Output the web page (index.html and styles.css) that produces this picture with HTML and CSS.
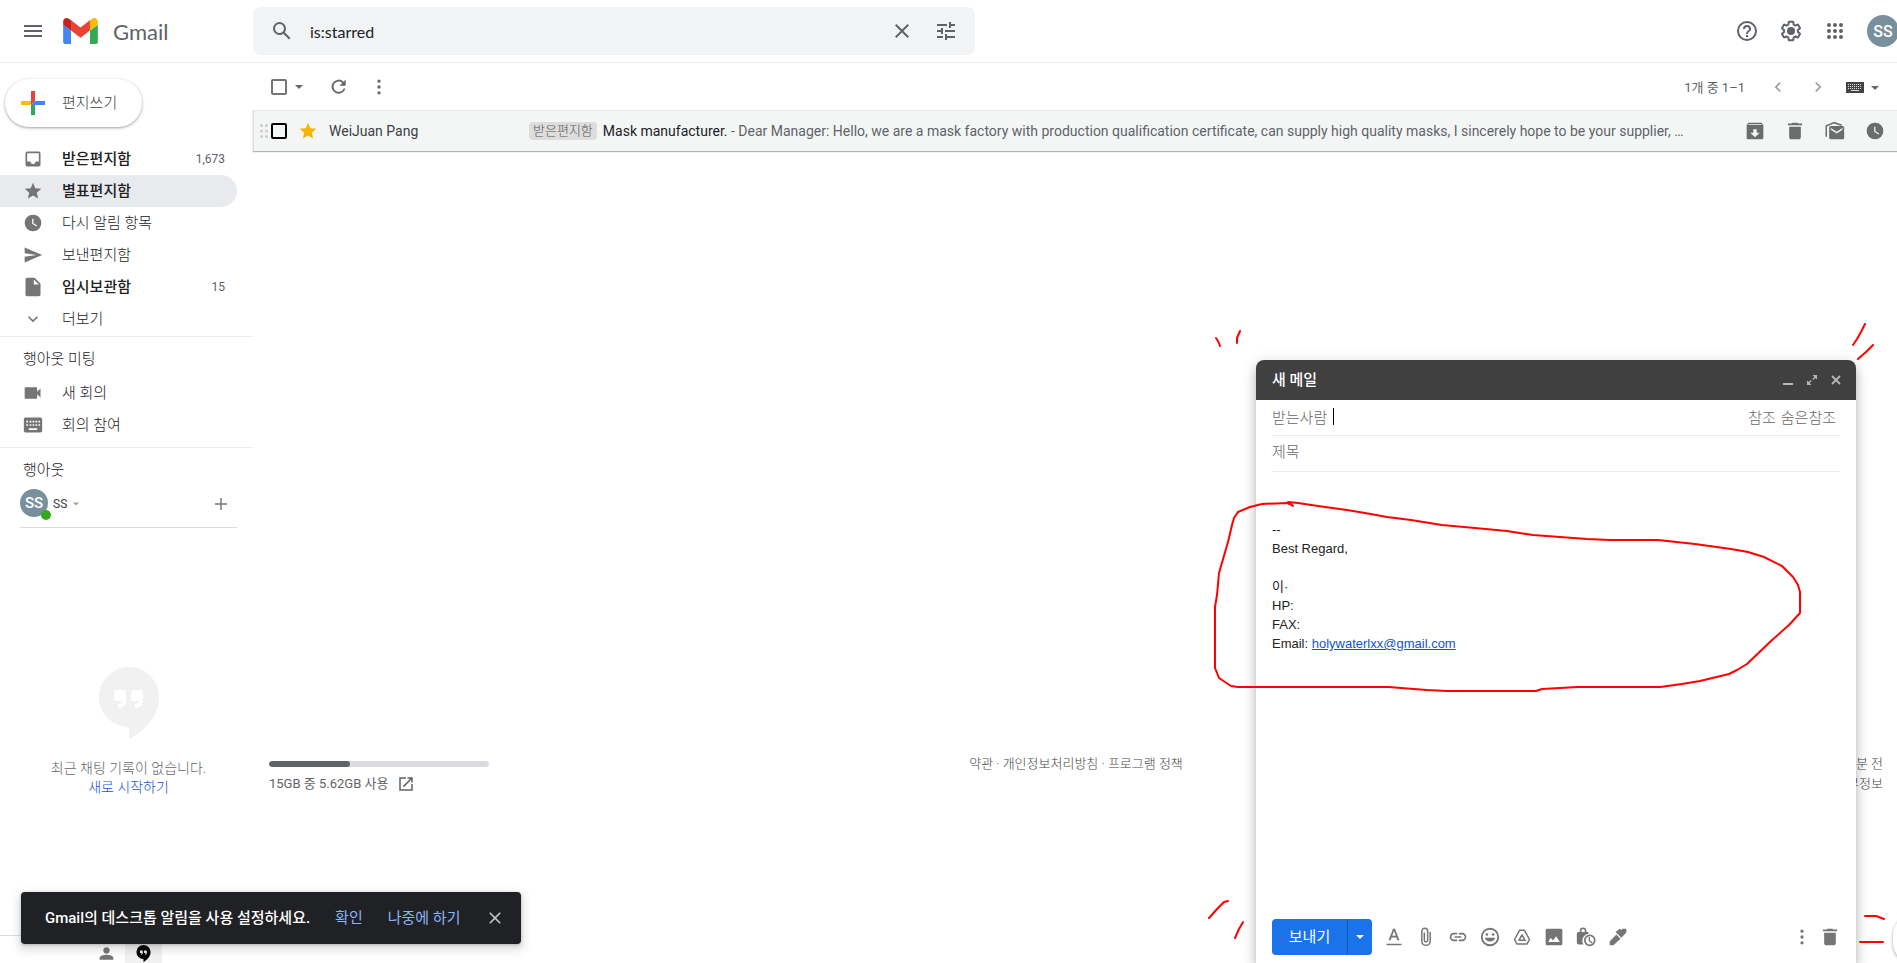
FILE: index.html
```html
<!DOCTYPE html>
<html lang="ko">
<head>
    <meta charset="UTF-8">
    <meta name="viewport" content="width=device-width, initial-scale=1.0">
    <title>별표편지함 - Gmail</title>
    <link rel="stylesheet" href="styles.css">
</head>
<body>
    <!-- Shared icons -->
    <svg class="sprite" aria-hidden="true">
        <symbol id="i-star" viewBox="0 0 24 24"><path d="M12 17.27 18.18 21l-1.64-7.03L22 9.24l-7.19-.61L12 2 9.19 8.63 2 9.24l5.46 4.73L5.82 21z"/></symbol>
        <symbol id="i-clock" viewBox="0 0 24 24"><path d="M12 2a10 10 0 1 0 0 20 10 10 0 0 0 0-20zm4.2 14.2L11 13V7h1.5v5.2l4.5 2.7z"/></symbol>
        <symbol id="i-trash" viewBox="0 0 24 24"><path d="M5 19.5C5 20.9 6.100 22 7.500 22h9c1.400 0 2.500-1.100 2.500-2.500V7H5zM20.500 3H16l-1-1H9L8 3H3.500v2h17z"/></symbol>
        <symbol id="i-close" viewBox="0 0 24 24"><path d="M19 6.400 17.600 5 12 10.600 6.400 5 5 6.400 10.600 12 5 17.600 6.400 19 12 13.400 17.600 19 19 17.600 13.400 12z"/></symbol>
        <symbol id="i-more" viewBox="0 0 24 24"><path d="M12 7a2 2 0 1 0 0-4 2 2 0 0 0 0 4zm0 3a2 2 0 1 0 0 4 2 2 0 0 0 0-4zm0 7a2 2 0 1 0 0 4 2 2 0 0 0 0-4z"/></symbol>
        <symbol id="i-caret" viewBox="0 0 8 4"><path d="M0 0h8L4 4z"/></symbol>
        <symbol id="i-hangouts" viewBox="0 0 60 72"><path fill-rule="evenodd" d="M30 0a30 30 0 0 0 0 60v12c14-7 30-22 30-42A30 30 0 0 0 30 0zM17 23h8a2 2 0 0 1 2 2v9c0 4-3 7-8 7v-4c3 0 4-1 4-3h-6a2 2 0 0 1-2-2v-7a2 2 0 0 1 2-2zm17 0h8a2 2 0 0 1 2 2v9c0 4-3 7-8 7v-4c3 0 4-1 4-3h-6a2 2 0 0 1-2-2v-7a2 2 0 0 1 2-2z"/></symbol>
    </svg>

    <div class="app">
        <header class="topbar">
            <div class="brand">
                <button class="icon-btn" aria-label="기본 메뉴"><svg class="icon" viewBox="0 0 24 24"><path d="M3 18h18v-2H3zm0-5h18v-2H3zm0-7v2h18V6z"/></svg></button>
                <a class="logo" href="#">
                    <svg class="logo-mark" viewBox="52 42 88 66">
                        <path fill="#4285f4" d="M58 108h14V74L52 59v43c0 3.320 2.690 6 6 6"/>
                        <path fill="#34a853" d="M120 108h14c3.320 0 6-2.690 6-6V59l-20 15"/>
                        <path fill="#fbbc04" d="M120 48v26l20-15v-8c0-7.420-8.470-11.650-14.400-7.200"/>
                        <path fill="#ea4335" d="M72 74V48l24 18 24-18v26L96 92"/>
                        <path fill="#c5221f" d="M52 51v8l20 15V48l-5.600-4.200c-5.940-4.450-14.400-.22-14.400 7.200"/>
                    </svg>
                    <span class="logo-text">Gmail</span>
                </a>
            </div>
            <form class="search">
                <button type="button" class="icon-btn" aria-label="메일 검색"><svg class="icon" viewBox="0 0 24 24"><path d="M20.490 19l-5.730-5.730C15.530 12.200 16 10.910 16 9.500A6.500 6.500 0 1 0 9.500 16c1.410 0 2.700-.47 3.770-1.240L19 20.490 20.490 19zM5 9.500C5 7.010 7.010 5 9.500 5S14 7.010 14 9.500 11.990 14 9.500 14 5 11.990 5 9.500z"/></svg></button>
                <input class="search-input" type="text" value="is:starred" aria-label="메일 검색">
                <button type="button" class="icon-btn" aria-label="검색어 지우기"><svg class="icon"><use href="#i-close"/></svg></button>
                <button type="button" class="icon-btn" aria-label="검색 옵션 표시"><svg class="icon" viewBox="0 0 24 24"><path d="M3 17v2h6v-2H3zM3 5v2h10V5H3zm10 16v-2h8v-2h-8v-2h-2v6h2zM7 9v2H3v2h4v2h2V9H7zm14 4v-2H11v2h10zm-6-4h2V7h4V5h-4V3h-2v6z"/></svg></button>
            </form>
            <div class="account">
                <button class="icon-btn" aria-label="지원"><svg class="icon" viewBox="0 0 24 24"><path d="M11 18h2v-2h-2v2zm1-16a10 10 0 1 0 0 20 10 10 0 0 0 0-20zm0 18a8 8 0 1 1 0-16 8 8 0 0 1 0 16zm0-14a4 4 0 0 0-4 4h2a2 2 0 0 1 4 0c0 2-3 1.750-3 5h2c0-2.250 3-2.500 3-5a4 4 0 0 0-4-4z"/></svg></button>
                <button class="icon-btn" aria-label="설정"><svg class="icon" viewBox="0 0 24 24"><path d="M13.850 22.250h-3.700c-.74 0-1.360-.54-1.450-1.270l-.27-1.890c-.27-.14-.53-.29-.79-.46l-1.800.72c-.7.260-1.470-.03-1.810-.65L2.200 15.530c-.35-.66-.2-1.440.36-1.880l1.530-1.190c-.01-.15-.02-.3-.02-.46 0-.15.010-.31.020-.46l-1.520-1.190c-.59-.45-.74-1.260-.37-1.880l1.850-3.190c.34-.62 1.110-.9 1.790-.63l1.810.730c.26-.17.520-.32.780-.46l.27-1.910c.09-.7.710-1.250 1.440-1.250h3.700c.74 0 1.360.540 1.450 1.270l.27 1.890c.27.140.530.290.790.460l1.800-.72c.71-.26 1.480.030 1.820.650l1.840 3.180c.36.660.2 1.440-.36 1.880l-1.520 1.190c.01.150.020.300.020.460s-.01.310-.02.460l1.520 1.190c.56.450.72 1.230.37 1.860l-1.860 3.220c-.34.620-1.110.9-1.800.630l-1.800-.72c-.26.170-.52.320-.78.460l-.27 1.910c-.1.680-.72 1.220-1.460 1.220zm-3.230-2h2.760l.37-2.550.53-.22c.44-.18.880-.44 1.340-.78l.45-.34 2.380.96 1.380-2.400-2.030-1.580.07-.56c.03-.26.060-.51.060-.78s-.03-.53-.06-.78l-.07-.56 2.030-1.580-1.390-2.400-2.390.96-.45-.35c-.42-.32-.87-.58-1.330-.77l-.52-.22-.37-2.550h-2.760l-.37 2.550-.53.210c-.44.190-.88.440-1.340.79l-.45.330-2.380-.95-1.390 2.390 2.030 1.580-.07.560a7 7 0 0 0-.06.790c0 .260.020.530.060.780l.07.560-2.030 1.580 1.380 2.400 2.390-.96.450.350c.43.330.86.580 1.330.770l.53.220z"/><circle cx="12" cy="12" r="4"/></svg></button>
                <button class="icon-btn" aria-label="Google 앱"><svg class="icon" viewBox="0 0 24 24"><path d="M6 8a2 2 0 1 0 0-4 2 2 0 0 0 0 4zm6 0a2 2 0 1 0 0-4 2 2 0 0 0 0 4zm6 0a2 2 0 1 0 0-4 2 2 0 0 0 0 4zM6 14a2 2 0 1 0 0-4 2 2 0 0 0 0 4zm6 0a2 2 0 1 0 0-4 2 2 0 0 0 0 4zm6 0a2 2 0 1 0 0-4 2 2 0 0 0 0 4zM6 20a2 2 0 1 0 0-4 2 2 0 0 0 0 4zm6 0a2 2 0 1 0 0-4 2 2 0 0 0 0 4zm6 0a2 2 0 1 0 0-4 2 2 0 0 0 0 4z"/></svg></button>
                <button class="avatar avatar-lg" aria-label="Google 계정">SS</button>
            </div>
        </header>

        <div class="layout">
            <aside class="sidebar">
                <button class="compose-btn">
                    <svg class="compose-plus" viewBox="0 0 24 24"><path fill="#ea4335" d="M10 0h4v10l-4 4z"/><path fill="#4285f4" d="M14 10h10v4H10z"/><path fill="#34a853" d="M10 14h4v10h-4z"/><path fill="#fbbc04" d="M0 10h10v4H0z"/></svg>
                    <span class="compose-label">편지쓰기</span>
                </button>

                <nav class="nav">
                    <a class="nav-item unread" href="#"><svg class="nav-icon" viewBox="0 0 24 24"><path d="M19 3H5a2 2 0 0 0-2 2v14c0 1.100.9 2 2 2h14a2 2 0 0 0 2-2V5a2 2 0 0 0-2-2zm0 12h-4a3 3 0 0 1-6 0H5V5h14z"/></svg><span class="nav-label">받은편지함</span><span class="nav-count">1,673</span></a>
                    <a class="nav-item unread active" href="#"><svg class="nav-icon"><use href="#i-star"/></svg><span class="nav-label">별표편지함</span></a>
                    <a class="nav-item" href="#"><svg class="nav-icon"><use href="#i-clock"/></svg><span class="nav-label">다시 알림 항목</span></a>
                    <a class="nav-item" href="#"><svg class="nav-icon" viewBox="0 0 24 24"><path d="M2 3v7l14 2-14 2v7l21-9z"/></svg><span class="nav-label">보낸편지함</span></a>
                    <a class="nav-item unread" href="#"><svg class="nav-icon" viewBox="0 0 24 24"><path d="M14 1H5a2 2 0 0 0-2 2v18c0 1.100.9 2 2 2h14a2 2 0 0 0 2-2V8zm-1 8V3l6 6z"/></svg><span class="nav-label">임시보관함</span><span class="nav-count">15</span></a>
                    <a class="nav-item" href="#"><svg class="nav-icon" viewBox="0 0 24 24"><path d="M16.600 8.600 12 13.200 7.400 8.600 6 10l6 6 6-6z"/></svg><span class="nav-label">더보기</span></a>
                </nav>

                <section class="meet">
                    <h2 class="side-title">행아웃 미팅</h2>
                    <a class="nav-item" href="#"><svg class="nav-icon" viewBox="0 0 24 24"><path d="M17 10.500V6a1 1 0 0 0-1-1H3a1 1 0 0 0-1 1v12a1 1 0 0 0 1 1h13a1 1 0 0 0 1-1v-4.500l4 4v-11z"/></svg><span class="nav-label">새 회의</span></a>
                    <a class="nav-item" href="#"><svg class="nav-icon" viewBox="0 0 24 24"><path fill-rule="evenodd" d="M3 3h18a2 2 0 0 1 2 2v14a2 2 0 0 1-2 2H3a2 2 0 0 1-2-2V5c0-1.100.9-2 2-2zm1 4v2h2V7zm4 0v2h2V7zm3.500 0v2h2V7zm3.500 0v2h2V7zm3.500 0v2h2V7zM4 11v2h2v-2zm4 0v2h2v-2zm3.500 0v2h2v-2zm3.500 0v2h2v-2zm3.500 0v2h2v-2zM7 16v2h10v-2z"/></svg><span class="nav-label">회의 참여</span></a>
                </section>

                <section class="hangouts">
                    <h2 class="side-title">행아웃</h2>
                    <div class="chat-user">
                        <span class="avatar avatar-sm">SS<span class="presence"></span></span>
                        <button class="chat-name">SS <svg class="caret"><use href="#i-caret"/></svg></button>
                        <button class="chat-add" aria-label="새 대화"><svg class="nav-icon" viewBox="0 0 24 24"><path d="M20 13h-7v7h-2v-7H4v-2h7V4h2v7h7z"/></svg></button>
                    </div>
                    <div class="chat-empty">
                        <svg class="chat-logo"><use href="#i-hangouts"/></svg>
                        <p>최근 채팅 기록이 없습니다.</p>
                        <a href="#">새로 시작하기</a>
                    </div>
                </section>

                <div class="side-tabs">
                    <button class="side-tab" aria-label="연락처"><svg class="nav-icon" viewBox="0 0 24 24"><circle cx="12" cy="7" r="5"/><path d="M1 22v-3c0-3 7-5 11-5s11 2 11 5v3z"/></svg></button>
                    <button class="side-tab selected" aria-label="행아웃 대화"><svg class="nav-icon"><use href="#i-hangouts"/></svg></button>
                </div>
            </aside>

            <main class="main">
                <div class="toolbar">
                    <input type="checkbox" class="check" aria-label="선택">
                    <button class="select-btn" aria-label="선택 메뉴"><svg class="caret"><use href="#i-caret"/></svg></button>
                    <button class="tool-btn" aria-label="새로고침"><svg class="icon-sm" viewBox="-1 -1 27 27"><path d="M18.700 5.300A9.500 9.500 0 1 0 21.200 14.400h-2.500A7 7 0 1 1 17 7l-3.900 3.900H21.500V2.500z"/></svg></button>
                    <button class="tool-btn" aria-label="더보기"><svg class="icon-sm"><use href="#i-more"/></svg></button>
                    <div class="pager">
                        <span class="pager-text">1개 중 1–1</span>
                        <button class="tool-btn faded" aria-label="이전"><svg class="icon-sm" viewBox="0 0 24 24"><path d="M15.400 7.400 14 6l-6 6 6 6 1.400-1.400-4.600-4.600z"/></svg></button>
                        <button class="tool-btn faded" aria-label="다음"><svg class="icon-sm" viewBox="0 0 24 24"><path d="M10 6 8.600 7.400l4.600 4.600-4.600 4.600L10 18l6-6z"/></svg></button>
                        <button class="keyboard-btn" aria-label="입력 도구">
                            <svg class="keyboard-icon" viewBox="0 0 18 11"><path d="M0 0h18v11H0z"/><path stroke="#ddd" stroke-dasharray="1 1" d="M2 2.500h14M2 4.500h14M2 6.500h14"/><path stroke="#ddd" d="M5 8.500h8"/></svg>
                            <svg class="caret"><use href="#i-caret"/></svg>
                        </button>
                    </div>
                </div>

                <div class="mail-row">
                    <svg class="drag" viewBox="0 0 8 14"><circle cx="1.500" cy="1.500" r="1.500"/><circle cx="6.500" cy="1.500" r="1.500"/><circle cx="1.500" cy="7" r="1.500"/><circle cx="6.500" cy="7" r="1.500"/><circle cx="1.500" cy="12.500" r="1.500"/><circle cx="6.500" cy="12.500" r="1.500"/></svg>
                    <input type="checkbox" class="check check-dark" aria-label="메일 선택">
                    <button class="star-btn" aria-label="별표"><svg class="icon-sm"><use href="#i-star"/></svg></button>
                    <span class="sender">WeiJuan Pang</span>
                    <span class="label">받은편지함</span>
                    <a class="subject" href="#">Mask manufacturer. <span class="snippet">- Dear Manager: Hello, we are a mask factory with production qualification certificate, can supply high quality masks, I sincerely hope to be your supplier, …</span></a>
                    <div class="row-actions">
                        <button class="tool-btn" aria-label="보관처리"><svg class="icon-sm" viewBox="0 0 24 24"><path fill-rule="evenodd" d="M4 2h16l2 3v15a2 2 0 0 1-2 2H4a2 2 0 0 1-2-2V5zm.5 1.500-.7 1h16.400l-.7-1zM10 10v4H6.500l5.500 5.500 5.500-5.500H14v-4z"/></svg></button>
                        <button class="tool-btn" aria-label="삭제"><svg class="icon-sm"><use href="#i-trash"/></svg></button>
                        <button class="tool-btn" aria-label="읽지 않은 상태로 표시"><svg class="icon-sm" viewBox="0 0 24 24"><path fill-rule="evenodd" d="M7 6h14a2 2 0 0 1 2 2v12a2 2 0 0 1-2 2H7a2 2 0 0 1-2-2V8c0-1.100.9-2 2-2zm0 2.500v2l7 4.500 7-4.500v-2L14 13z"/><path fill="none" stroke="currentColor" stroke-width="1.800" d="M1.500 19V6l9.500-4 9 3"/></svg></button>
                        <button class="tool-btn" aria-label="다시 알림"><svg class="icon-sm"><use href="#i-clock"/></svg></button>
                    </div>
                </div>

                <footer class="footer">
                    <div class="storage">
                        <div class="storage-bar"><div class="storage-used" style="width: 37%"></div></div>
                        <div class="storage-text">15GB 중 5.62GB 사용 <a href="#" aria-label="관리"><svg class="open-icon" viewBox="0 0 24 24"><path d="M19 19H5V5h7V3H3v18h18v-9h-2zM14 3v2h3.600l-9.800 9.800 1.400 1.400L19 6.400V10h2V3z"/></svg></a></div>
                    </div>
                    <div class="terms"><a href="#">약관</a> · <a href="#">개인정보처리방침</a> · <a href="#">프로그램 정책</a></div>
                    <div class="activity">
                        <div>마지막 계정 활동: 0분 전</div>
                        <a href="#">세부정보</a>
                    </div>
                </footer>
            </main>
        </div>

        <button class="panel-toggle" aria-label="측면 패널 표시"></button>

        <div class="toast">
            <span class="toast-text">Gmail의 데스크톱 알림을 사용 설정하세요.</span>
            <button class="toast-action">확인</button>
            <button class="toast-action">나중에 하기</button>
            <button class="toast-close" aria-label="닫기"><svg class="icon-sm"><use href="#i-close"/></svg></button>
        </div>

        <section class="compose">
            <div class="compose-head">
                <h2 class="compose-title">새 메일</h2>
                <button class="head-btn" aria-label="최소화"><svg viewBox="0 0 12 12"><path d="M1 9h10v2H1z"/></svg></button>
                <button class="head-btn" aria-label="전체 화면"><svg viewBox="0 0 12 12"><path d="M6.500 1H11v4.500L9.400 3.900 7.300 6l-1-1 2.100-2.100zM5.500 11H1V6.500l1.600 1.600L4.700 6l1 1-2.100 2.100z"/></svg></button>
                <button class="head-btn" aria-label="닫기"><svg viewBox="0 0 12 12"><path fill="none" stroke="currentColor" stroke-width="1.800" d="m2 2 8 8m0-8-8 8"/></svg></button>
            </div>
            <div class="compose-form">
                <div class="field">
                    <label for="to">받는사람</label>
                    <span class="cursor"></span>
                    <input id="to" type="text">
                    <button class="cc-btn">참조</button>
                    <button class="cc-btn">숨은참조</button>
                </div>
                <div class="field">
                    <input type="text" placeholder="제목" aria-label="제목">
                </div>
                <div class="message">
                    <p>--</p>
                    <p>Best Regard,</p>
                    <p><br></p>
                    <p>이·</p>
                    <p>HP:</p>
                    <p>FAX:</p>
                    <p>Email: <a href="#">holywaterlxx@gmail.com</a></p>
                </div>
                <div class="compose-tools">
                    <div class="send">
                        <button class="send-btn">보내기</button>
                        <button class="send-more" aria-label="전송 옵션"><svg class="caret"><use href="#i-caret"/></svg></button>
                    </div>
                    <button class="format-btn" aria-label="서식 지정 옵션"><svg viewBox="0 0 24 24"><path d="M3 20h18v2H3zM5.500 16h2.400l1.300-3.500h5.600l1.300 3.500h2.400L13.200 2h-2.400zm4.400-5.500L12 4.600l2.100 5.900z"/></svg></button>
                    <button class="format-btn" aria-label="파일 첨부"><svg viewBox="0 0 24 24"><path fill="none" stroke="currentColor" stroke-width="1.800" d="M17 6v11a5 5 0 0 1-10 0V5a3.500 3.500 0 0 1 7 0v11a2 2 0 0 1-4 0V6.500"/></svg></button>
                    <button class="format-btn" aria-label="링크 삽입"><svg viewBox="0 0 24 24"><path d="M17 7h-4v2h4a3 3 0 0 1 0 6h-4v2h4a5 5 0 0 0 0-10zM11 15H7a3 3 0 0 1 0-6h4V7H7a5 5 0 0 0 0 10h4zM8 11h8v2H8z"/></svg></button>
                    <button class="format-btn" aria-label="그림 이모티콘 삽입"><svg viewBox="0 0 24 24"><path fill-rule="evenodd" d="M12 1a11 11 0 1 0 0 22 11 11 0 0 0 0-22zm0 2.200a8.800 8.800 0 1 1 0 17.600 8.800 8.800 0 0 1 0-17.600z"/><circle cx="8.200" cy="9" r="1.600"/><circle cx="15.800" cy="9" r="1.600"/><path d="M5.800 13h12.400a6.500 6.500 0 0 1-12.400 0z"/></svg></button>
                    <button class="format-btn" aria-label="드라이브를 사용하여 파일 삽입"><svg viewBox="0 0 24 24"><g fill="none" stroke="currentColor" stroke-width="1.800" stroke-linejoin="round"><path d="M9 4h6l6 11-3 5.500H6L3 15z"/><path d="m12 9.500 3.700 6.500H8.300z"/></g></svg></button>
                    <button class="format-btn" aria-label="사진 삽입"><svg viewBox="0 0 24 24"><path d="M22 20V4a2 2 0 0 0-2-2H4a2 2 0 0 0-2 2v16c0 1.100.9 2 2 2h16a2 2 0 0 0 2-2zM8 13l2.500 3 2-2 2-3 4.500 7H5z"/></svg></button>
                    <button class="format-btn" aria-label="비밀 모드"><svg viewBox="0 0 24 24"><path fill-rule="evenodd" d="M3 6h1.500V4.500a4 4 0 0 1 8 0V6H15v2A8.500 8.500 0 0 0 9 21H3a2 2 0 0 1-2-2V8c0-1.100.9-2 2-2zm3.500 0h4V4.500a2 2 0 0 0-4 0z"/><circle cx="16.500" cy="16" r="6" fill="none" stroke="currentColor" stroke-width="2"/><path fill="none" stroke="currentColor" stroke-width="1.600" d="M16 12v4.500l3.500 2.500"/></svg></button>
                    <button class="format-btn" aria-label="서명 삽입"><svg viewBox="0 0 24 24"><path d="M2 22v-4.500l8-8.500 5 5-8.500 8zM10.500 7.500 9 6l5-4 2 1.500L17.500 2H22v4.500L16 13z"/></svg></button>
                    <span class="spacer"></span>
                    <button class="end-btn" aria-label="옵션 더보기"><svg><use href="#i-more"/></svg></button>
                    <button class="end-btn" aria-label="임시보관 메일 삭제"><svg><use href="#i-trash"/></svg></button>
                </div>
            </div>

            <!-- Hand-drawn marks around the signature -->
            <svg class="marks" viewBox="0 0 697 653" aria-hidden="true">
                <path d="M92 195 87 193 62 194 50 197 38 202 34 208 32 215 28 232 19 263 17 285 15 297V358L19 368 31 376 38 377H189L201 378 227 380 247 381H336L342 379 378 377H460L482 374 500 371 529 364 537 360 547 354 571 331 589 315 600 303V282L598 275 593 267 582 256 564 247 548 242 531 239 495 234 458 230 410 230 387 229 360 227 333 225 307 221 275 218 242 215 211 210 187 207 165 203 147 200 118 196 98 193 88 192 93 196"/>
                <path d="M16 28l2 3 2 5M40 21l-3 7v5M665 14l-4 8-4 7-4 6M673 35l-7 7-8 7"/>
                <path d="M28 591l-4 1-6 6-9 10M43 612l-4 7-4 9M665 606h11l8 3M660 632h23"/>
            </svg>
        </section>
    </div>
</body>
</html>
```
FILE: styles.css
```css
* {
    margin: 0;
    padding: 0;
    box-sizing: border-box;
}

body {
    font-family: Roboto, "Noto Sans CJK KR", sans-serif;
    font-size: 14px;
    color: #202124;
    background: #fff;
    overflow: hidden;
}

button,
input {
    font: inherit;
    color: inherit;
    border: none;
    background: none;
    outline: none;
}

button {
    display: flex;
    align-items: center;
    justify-content: center;
    cursor: pointer;
    flex-shrink: 0;
}

a {
    color: inherit;
    text-decoration: none;
}

svg {
    fill: currentColor;
    flex-shrink: 0;
    display: block;
}

.sprite {
    position: absolute;
    width: 0;
    height: 0;
}

.icon {
    width: 24px;
    height: 24px;
}

.icon-sm {
    width: 20px;
    height: 20px;
}

.caret {
    width: 8px;
    height: 4px;
}

.app {
    position: relative;
    height: 100vh;
    overflow: hidden;
    display: flex;
    flex-direction: column;
}

/* Top bar */
.topbar {
    display: flex;
    align-items: center;
    height: 63px;
    border-bottom: 1px solid #ebecee;
    color: #5f6368;
    flex-shrink: 0;
}

.brand {
    width: 253px;
    display: flex;
    align-items: center;
    padding-left: 11px;
    flex-shrink: 0;
}

.icon-btn {
    width: 44px;
    height: 44px;
}

.logo {
    display: flex;
    align-items: center;
    gap: 15px;
    padding-left: 8px;
}

.logo-mark {
    width: 35px;
    height: 26px;
}

.logo-text {
    font-family: Lato, sans-serif;
    font-size: 22px;
}

.search {
    display: flex;
    align-items: center;
    width: 722px;
    height: 48px;
    padding: 0 7px;
    border-radius: 8px;
    background: #f1f3f4;
}

.search-input {
    flex: 1;
    min-width: 0;
    padding-left: 6px;
    font-family: Lato, sans-serif;
    font-size: 16px;
    color: #202124;
}

.account {
    display: flex;
    align-items: center;
    margin-left: auto;
    margin-right: -2px;
}

.avatar {
    display: flex;
    align-items: center;
    justify-content: center;
    border-radius: 50%;
    background: #78909c;
    color: #fff;
    position: relative;
    flex-shrink: 0;
}

.avatar-lg {
    width: 32px;
    height: 32px;
    margin-left: 10px;
    font-size: 16px;
    font-weight: 500;
}

.avatar-sm {
    width: 28px;
    height: 28px;
    font-size: 15px;
    font-weight: 500;
}

.layout {
    flex: 1;
    display: flex;
    min-height: 0;
}

/* Sidebar */
.sidebar {
    width: 253px;
    display: flex;
    flex-direction: column;
    flex-shrink: 0;
}

.compose-btn {
    align-self: flex-start;
    gap: 17px;
    height: 48px;
    margin: 16px 0 16px 5px;
    padding: 0 25px 0 16px;
    border-radius: 24px;
    background: #fff;
    color: #3c4043;
    font-size: 15px;
    font-weight: 300;
    box-shadow: 0 1px 2px rgba(60, 64, 67, 0.3), 0 1px 3px 1px rgba(60, 64, 67, 0.15);
}

.compose-label {
    padding-bottom: 4px;
}

.compose-plus {
    width: 24px;
    height: 24px;
}

.nav-item {
    display: flex;
    align-items: center;
    height: 32px;
    margin-right: 16px;
    padding: 0 12px 0 23px;
    border-radius: 0 16px 16px 0;
    font-size: 15px;
    font-weight: 300;
}

.nav-item.unread {
    font-weight: 500;
}

.nav-item.active {
    background: #e8eaed;
}

.nav-icon {
    width: 20px;
    height: 20px;
    color: #757575;
}

.nav-label {
    flex: 1;
    margin-left: 19px;
    padding-bottom: 4px;
}

.nav-count {
    font-size: 12px;
    font-weight: 400;
    color: #5f6368;
}

.meet {
    margin-top: 1px;
    border-top: 1px solid #ececec;
    border-bottom: 1px solid #ececec;
    padding-bottom: 6px;
}

.side-title {
    height: 40px;
    line-height: 44px;
    padding-left: 23px;
    font-size: 15px;
    font-weight: 300;
}

.hangouts {
    flex: 1;
    display: flex;
    flex-direction: column;
    min-height: 0;
}

.chat-user {
    display: flex;
    align-items: center;
    height: 40px;
    margin: 0 16px 0 20px;
    padding-right: 7px;
    border-bottom: 1px solid #dadce0;
    padding-bottom: 10px;
}

.presence {
    position: absolute;
    right: -3px;
    bottom: -3px;
    width: 10px;
    height: 10px;
    border-radius: 50%;
    background: #34a91c;
}

.chat-name {
    gap: 6px;
    margin-left: 5px;
    padding-top: 2px;
    font-size: 12px;
    color: #3c4043;
}

.chat-name .caret {
    width: 6px;
    color: #9e9e9e;
}

.chat-add {
    margin-left: auto;
    padding-top: 2px;
}

.chat-add .nav-icon {
    width: 18px;
    height: 18px;
}

.chat-empty {
    flex: 1;
    display: flex;
    flex-direction: column;
    align-items: center;
    justify-content: center;
    padding-left: 4px;
    font-size: 14px;
    font-weight: 300;
    line-height: 19px;
    color: #666;
}

.chat-empty a {
    color: #1155cc;
}

.chat-logo {
    width: 60px;
    height: 72px;
    margin-bottom: 20px;
    color: #f1f1f1;
}

.side-tabs {
    display: flex;
    justify-content: center;
    height: 28px;
    padding-right: 4px;
    border-top: 1px solid #dadce0;
}

.side-tab {
    width: 37px;
    padding-top: 9px;
    align-items: flex-start;
}

.side-tab .nav-icon {
    width: 15px;
    height: 17px;
}

.side-tab.selected {
    background: #f1f1f1;
}

.side-tab.selected .nav-icon {
    color: #000;
}

/* Mail list */
.main {
    flex: 1;
    min-width: 0;
}

.toolbar {
    display: flex;
    align-items: center;
    height: 47px;
    padding: 0 18px;
    color: #666;
}

.check {
    appearance: none;
    width: 16px;
    height: 16px;
    border: 2px solid #757575;
    border-radius: 2px;
    flex-shrink: 0;
}

.check-dark {
    border-color: #000;
}

.select-btn {
    width: 24px;
    height: 20px;
    margin-right: 8px;
}

.tool-btn {
    width: 40px;
    height: 40px;
}

.faded {
    color: #9a9c9f;
}

.pager {
    display: flex;
    align-items: center;
    margin-left: auto;
}

.pager-text {
    margin-right: 13px;
    font-size: 13px;
    color: #5f6368;
}

.keyboard-btn {
    gap: 7px;
    padding: 2px 0 0 8px;
}

.keyboard-icon {
    width: 18px;
    height: 11px;
    color: #444;
}

.mail-row {
    display: flex;
    align-items: center;
    height: 41px;
    padding: 0 2px 0 6px;
    border-left: 1px solid #dadce0;
    background: #f4f6f6;
    box-shadow: inset 0 1px 0 #e5e8e8, 0 1px 1px rgba(60, 64, 67, 0.4);
}

.drag {
    width: 8px;
    height: 14px;
    margin-right: 3px;
    color: #ccc;
}

.star-btn {
    width: 42px;
    height: 40px;
    color: #f4b400;
}

.sender {
    width: 200px;
    color: #3c4043;
}

.label {
    height: 18px;
    margin-right: 6px;
    padding: 0 4px;
    border-radius: 4px;
    background: #ddd;
    color: #555;
    font-size: 13px;
    font-weight: 300;
    line-height: 17px;
    flex-shrink: 0;
}

.subject {
    flex: 1;
    min-width: 0;
    white-space: nowrap;
    overflow: hidden;
    text-overflow: ellipsis;
    color: #202124;
}

.snippet {
    color: #5f6368;
}

.row-actions {
    display: flex;
    margin-left: 14px;
    color: #6b6d6d;
}

.footer {
    display: grid;
    grid-template-columns: 1fr auto 1fr;
    margin-top: 603px;
    padding: 0 14px 0 16px;
    font-size: 13px;
    font-weight: 300;
    line-height: 20px;
    color: #444;
}

.storage-bar {
    width: 220px;
    height: 6px;
    margin-top: 7px;
    border-radius: 3px;
    background: #dadce0;
    overflow: hidden;
}

.storage-used {
    height: 100%;
    border-radius: 3px;
    background: #5f6368;
}

.storage-text {
    display: flex;
    align-items: center;
    gap: 9px;
    margin-top: 7px;
    font-weight: 400;
    color: #5f6368;
}

.open-icon {
    width: 18px;
    height: 18px;
}

.activity {
    text-align: right;
}

.panel-toggle {
    position: absolute;
    right: -36px;
    bottom: 0;
    width: 40px;
    height: 48px;
    border-radius: 24px;
    background: #fff;
    box-shadow: 0 1px 3px rgba(60, 64, 67, 0.5);
}

/* Notification prompt */
.toast {
    position: absolute;
    left: 21px;
    bottom: 19px;
    display: flex;
    align-items: center;
    height: 52px;
    padding: 0 16px 0 24px;
    border-radius: 4px;
    background: #202124;
    color: #fff;
    font-size: 15px;
    box-shadow: 0 1px 3px rgba(60, 64, 67, 0.3), 0 4px 8px 3px rgba(60, 64, 67, 0.15);
}

.toast-text {
    margin-right: 25px;
    padding-bottom: 3px;
    font-weight: 500;
}

.toast-action {
    margin-right: 25px;
    padding-bottom: 3px;
    color: #8ab4f8;
}

.toast-close {
    color: #bdc1c6;
}

/* Compose window */
.compose {
    position: absolute;
    right: 41px;
    bottom: 0;
    width: 600px;
    height: calc(100vh - 360px);
    display: flex;
    flex-direction: column;
    border-radius: 8px 8px 0 0;
    background: #fff;
    box-shadow: 0 8px 10px 1px rgba(0, 0, 0, 0.14), 0 3px 14px 2px rgba(0, 0, 0, 0.12), 0 5px 5px -3px rgba(0, 0, 0, 0.2);
}

.compose-head {
    display: flex;
    align-items: center;
    height: 40px;
    padding: 0 8px 0 16px;
    border-radius: 8px 8px 0 0;
    background: #404040;
    color: #fff;
}

.compose-title {
    flex: 1;
    padding-bottom: 4px;
    font-size: 15px;
    font-weight: 500;
}

.head-btn {
    width: 24px;
    height: 24px;
    color: #b8b8b8;
}

.head-btn svg {
    width: 12px;
    height: 12px;
}

.compose-form {
    flex: 1;
    display: flex;
    flex-direction: column;
    padding: 0 16px;
}

.field {
    display: flex;
    align-items: center;
    height: 36px;
    padding: 0 4px 3px 0;
    border-bottom: 1px solid #ebebeb;
    color: #666;
    font-size: 15px;
    font-weight: 300;
}

.field input {
    flex: 1;
    min-width: 0;
}

.field input::placeholder {
    color: #666;
}

.cursor {
    width: 1px;
    height: 17px;
    margin-left: 6px;
    background: #000;
}

.cc-btn {
    margin-left: 5px;
}

.message {
    flex: 1;
    padding-top: 48px;
    font-family: "Liberation Sans", "Noto Sans CJK KR", sans-serif;
    font-size: 13px;
    line-height: 19px;
    color: #222;
}

.message a {
    color: #1155cc;
    text-decoration: underline;
}

.compose-tools {
    display: flex;
    align-items: center;
    height: 52px;
    color: #757575;
}

.send {
    display: flex;
    height: 36px;
    margin-right: 6px;
    border-radius: 4px;
    background: #1a73e8;
    color: #fff;
}

.send-btn {
    width: 75px;
    padding-bottom: 4px;
    font-size: 15px;
}

.send-more {
    width: 25px;
    border-left: 1px solid #1558b8;
}

.format-btn {
    width: 32px;
    height: 32px;
}

.format-btn svg,
.end-btn svg {
    width: 20px;
    height: 20px;
}

.spacer {
    flex: 1;
}

.end-btn {
    width: 28px;
    height: 32px;
}

.end-btn:last-child {
    width: 20px;
    margin: 0 0 0 4px;
}

.marks {
    position: absolute;
    left: -56px;
    top: -50px;
    width: 697px;
    height: 653px;
    fill: none;
    stroke: #f00;
    stroke-width: 2;
    stroke-linecap: round;
    stroke-linejoin: round;
    pointer-events: none;
}
```
